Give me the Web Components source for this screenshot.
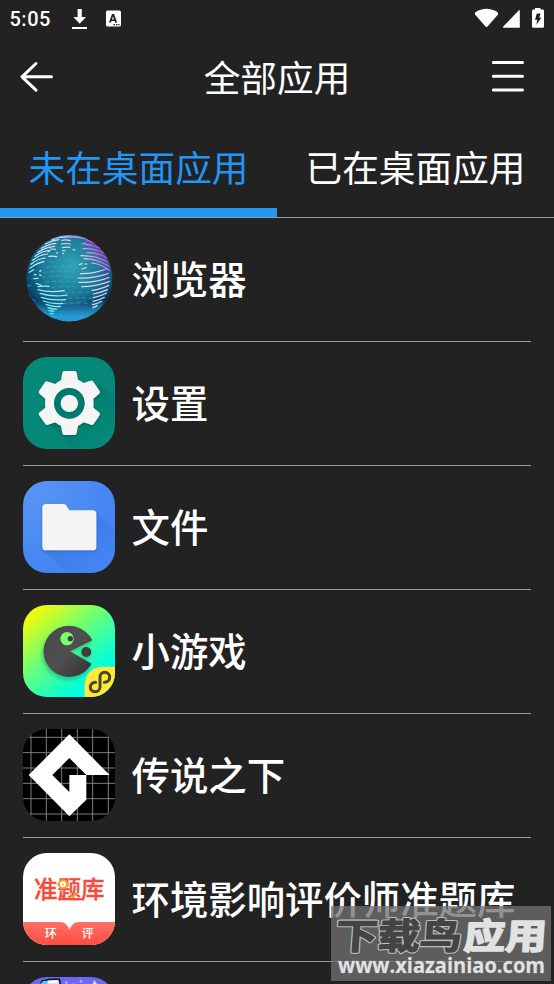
<!DOCTYPE html>
<html lang="zh-CN">
<head>
<meta charset="utf-8">
<title>全部应用</title>
<style>
  html, body {
    margin: 0;
    height: 100%;
    overflow: hidden;
    background: #222;
  }
  body {
    color: #fff;
    font-family: "Noto Sans CJK SC", sans-serif;
  }
</style>
</head>
<body>
<launcher-screen>
  <status-bar slot="top" time="5:05"></status-bar>
  <title-bar slot="top">全部应用</title-bar>
  <tab-bar slot="top">
    <tab-item selected>未在桌面应用</tab-item>
    <tab-item>已在桌面应用</tab-item>
  </tab-bar>

  <app-row>
    <globe-icon slot="icon"></globe-icon>浏览器
  </app-row>
  <app-row>
    <settings-icon slot="icon"></settings-icon>设置
  </app-row>
  <app-row>
    <files-icon slot="icon"></files-icon>文件
  </app-row>
  <app-row>
    <games-icon slot="icon"></games-icon>小游戏
  </app-row>
  <app-row>
    <maker-icon slot="icon"></maker-icon>传说之下
  </app-row>
  <app-row>
    <exam-icon slot="icon"></exam-icon>环境影响评价师准题库
  </app-row>
  <app-row>
    <space-icon slot="icon"></space-icon>
  </app-row>

  <site-mark slot="overlay"></site-mark>
</launcher-screen>

<script>
// registers an element whose shadow root is a clone of the given markup
function define(name, html, setup) {
  const template = document.createElement('template');
  template.innerHTML = html;

  window.customElements.define(name, class extends HTMLElement {
    constructor() {
      super();
      this.attachShadow({ mode: 'open' });
      this.shadowRoot.appendChild(template.content.cloneNode(true));
    }

    connectedCallback() {
      if (setup) setup(this, this.shadowRoot);
    }
  });
}

// app icons are all 92px tiles
function defineIcon(name, svg, radius = '24px') {
  define(name, `
    <style>
      :host { display: block; width: 92px; height: 92px; border-radius: ${radius}; overflow: hidden; }
      svg { display: block; width: 100%; height: 100%; }
    </style>
    ${svg}
  `);
}

define('launcher-screen', `
  <style>
    :host { display: flex; flex-direction: column; position: relative; height: 984px; width: 554px; overflow: hidden; }
    header { flex: none; }
    main { flex: 1; min-height: 0; overflow: hidden; }
  </style>
  <header><slot name="top"></slot></header>
  <main><slot></slot></main>
  <slot name="overlay"></slot>
`);

define('status-bar', `
  <style>
    :host { display: flex; align-items: center; height: 38px; padding: 0 8px 0 9.500px; font: 500 20px Roboto, sans-serif; }
    .time { width: 60.500px; letter-spacing: .5px; }
    svg { display: block; fill: #fff; }
    .left { flex: 1; }
  </style>
  <span class="time"></span>
  <svg class="left" width="80" height="38" viewBox="70 0 80 38" preserveAspectRatio="xMinYMid">
    <path d="M77.6 9h4.2v8h4.2l-6.3 6.8-6.3-6.8h4.2zM72 27h15v2H72z"/>
    <path fill-rule="evenodd" d="M107.5 10.5h12q1.5 0 1.5 1.5v13q0 1.500-1.500 1.500h-12q-1.500 0-1.500-1.500v-13q0-1.500 1.500-1.500zM112 14l-3 8.500h2l.5-1.600h3l.6 1.600h2l-3-8.500zM113 16.300l1 3.100h-2z"/>
    <path fill="#222" d="M113.500 24h1.500v1.300h-1.500zM116 24h1.500v1.300h-1.500zM118.300 24h1.200v1.300h-1.200z"/>
  </svg>
  <svg width="74" height="38" viewBox="472 0 74 38">
    <path d="M475 12.500Q486.500 5 498 12.500V14.500L487.500 26.500Q486.500 27.500 485.500 26.500L475 14.500z"/>
    <path d="M519.800 10v17.800H503.500q-1-.3-.3-1.300L518.500 10.700z"/>
    <path d="M535 9.500V8h5.500v1.500h2.300q1.200 0 1.200 1.200v15.900q0 1.200-1.200 1.200h-9.600q-1.200 0-1.200-1.200V10.700q0-1.200 1.200-1.200z"/>
    <path fill="#222" d="M536.800 13.500h3.600l-1 4.200h2l-5 7 .8-5h-2.200z"/>
  </svg>
`, (host, root) => {
  root.querySelector('.time').textContent = host.getAttribute('time');
});

define('title-bar', `
  <style>
    :host { display: grid; grid-template-columns: 60px 1fr 60px; align-items: center; height: 78px; font-size: 36.67px; line-height: 76px; font-weight: 400; }
    h1 { margin: 0; padding-bottom: 2px; font: inherit; text-align: center; }
    svg { display: block; fill: none; stroke: #fff; stroke-width: 3; stroke-linecap: round; stroke-linejoin: round; }
  </style>
  <svg width="60" height="78" viewBox="0 38 60 78"><path d="M36 63.500L22 76.800L36 90.200M22 76.800H51.500"/></svg>
  <h1><slot></slot></h1>
  <svg width="60" height="78" viewBox="494 38 60 78" overflow="visible"><path d="M493.300 62.500h29.200M493.300 76.300h29.200M493.300 90.100h29.200"/></svg>
`);

define('tab-bar', `
  <style>
    :host { display: grid; grid-template-columns: 1fr 1fr; height: 101px; border-bottom: 1px solid #999; }
  </style>
  <slot></slot>
`);

define('tab-item', `
  <style>
    :host { display: flex; justify-content: center; box-sizing: border-box; height: 101px; padding-top: 22px; line-height: 56px; font-size: 36.67px; font-weight: 400; }
    :host([selected]) { color: #2196f3; border-bottom: 9.500px solid #2196f3; }
  </style>
  <slot></slot>
`);

define('app-row', `
  <style>
    :host { display: flex; align-items: center; height: 124px; box-sizing: border-box; padding: 0 23px 2px; font-size: 38.4px; font-weight: 500; white-space: nowrap; background: linear-gradient(#999, #999) 23px 100% / 508px 1px no-repeat; }
    .label { padding: 0 0 4px 16.500px; line-height: 60px; }
  </style>
  <slot name="icon"></slot>
  <span class="label"><slot></slot></span>
`);

defineIcon('globe-icon', `
  <svg viewBox="39 24 276 276">
    <defs>
      <radialGradient id="sea" cx=".52" cy=".36" r=".65">
        <stop offset="0" stop-color="#30a4b5"/>
        <stop offset=".5" stop-color="#1b7b98"/>
        <stop offset=".85" stop-color="#0a456a"/>
        <stop offset="1" stop-color="#123b61"/>
      </radialGradient>
      <linearGradient id="glow" x2="0" y2="1">
        <stop offset=".75" stop-color="#2da6e0" stop-opacity="0"/>
        <stop offset=".94" stop-color="#249ad2"/>
      </linearGradient>
      <linearGradient id="land" gradientUnits="userSpaceOnUse" x1="90" y1="250" x2="290" y2="75">
        <stop offset="0" stop-color="#53f5ec"/>
        <stop offset=".35" stop-color="#c3eff5"/>
        <stop offset=".75" stop-color="#dfcaf1"/>
        <stop offset=".95" stop-color="#ef32ec"/>
      </linearGradient>
      <clipPath id="ball"><circle cx="178" cy="160" r="130"/></clipPath>
    </defs>
    <g clip-path="url(#ball)">
      <circle cx="178" cy="160" r="130" fill="url(#sea)"/>
      <path d="M48 185Q80 245 170 240T300 190V220Q260 263 160 257T55 220z" fill="#082b57" opacity=".5"/>
      <circle cx="178" cy="160" r="130" fill="url(#glow)"/>
      <g stroke="#3cacd2" stroke-width="3" stroke-dasharray="12 9" fill="none" opacity=".65">
        <path d="M120 111Q155 105 210 109M108 127Q160 121 205 126M100 142Q150 137 198 142M96 157Q150 151 199 156M106 172Q150 166 201 171M125 188Q160 182 210 187M164 204Q200 199 246 203M174 220Q210 216 246 220M158 236Q200 231 246 236M125 274H235M55 205L67 222L82 231M286 205L299 190M52 183L74 179"/>
      </g>
      <g stroke="url(#land)" stroke-width="3.700" stroke-linecap="round" fill="none">
        <path d="M126 45Q148 35 174 33M106 57Q128 46 147 44M94 70Q118 56 138 55M84 82Q105 67 134 64M75 94Q95 78 120 76M68 106Q88 89 112 87M63 118Q82 101 106 99M60 130Q78 115 102 110M58 142L71 134M117 94Q130 92 140 95M112 78L118 80M122 72L136 73M139 83L142 84"/>
        <path d="M155 46Q168 43 181 47M154 57Q168 54 181 57M157 68Q168 65 179 67M158 77L165 77M158 86L161 85M189 74L195 75M216 57L226 54M144 38Q190 32 226 40"/>
        <path d="M232 46Q246 49 258 55M226 58Q247 58 268 69M219 71Q252 69 279 83M232 83Q262 82 287 97M213 92Q257 91 292 111M222 101Q262 101 296 124M245 114Q273 116 298 136M208 119L217 116M225 117H231M216 132L228 128"/>
        <path d="M211 146Q252 147 292 131M203 159Q251 161 296 145M207 172Q255 174 298 157M215 185Q257 185 299 169M246 196Q275 192 296 181M250 207Q272 203 292 194M250 218Q273 214 289 205M249 229Q270 225 283 217M248 239Q263 236 275 229M249 248L262 242"/>
        <path d="M79 175L94 181M84 185Q98 183 117 184M84 194Q117 204 163 197M90 205Q127 217 172 210M94 217Q125 227 167 224M100 228Q126 238 158 235M108 238Q134 247 152 244M114 248Q129 254 140 252M117 257L131 259M121 266L129 266M73 149H78M71 161L84 160M89 139L93 137M89 149L93 152"/>
      </g>
      <path d="M123 40Q178 18 233 43" stroke="#78a7dc" stroke-width="9" fill="none" opacity=".7"/>
      <path d="M222 42Q278 72 300 130" stroke="#a72fc7" stroke-width="3" fill="none"/>
    </g>
  </svg>
`, '0');

defineIcon('settings-icon', `
  <svg viewBox="39 36 276 276">
    <defs>
      <linearGradient id="shade" x2="1" y2="1">
        <stop offset=".4" stop-color="#00665d" stop-opacity=".4"/>
        <stop offset=".85" stop-color="#00796b" stop-opacity="0"/>
      </linearGradient>
      <filter id="drop" x="-20%" y="-20%" width="140%" height="140%">
        <feDropShadow dx="0" dy="3" stdDeviation="3" flood-color="#004d45" flood-opacity=".6"/>
      </filter>
    </defs>
    <path fill="#058878" d="M39 36h276v276H39z"/>
    <path fill="url(#shade)" d="M90 210L192 312H315V162L268 115L195 265z"/>
    <path fill="#f5f5f5" fill-rule="evenodd" filter="url(#drop)" d="M163 78H194Q199 78 200 83L204 104Q213 108 221 114L242 107Q247 105 250 110L269 138Q272 143 267 147L250 161Q252 175 250 188L267 202Q272 206 269 211L251 237Q248 242 243 239L221 232Q213 239 204 242L200 264Q199 270 194 270H163Q158 270 157 264L153 242Q143 239 136 232L114 239Q109 242 106 237L87 210Q84 205 89 202L106 188Q104 175 106 161L89 147Q84 143 87 138L105 112Q108 107 114 110L136 117Q144 109 153 106L157 83Q158 78 163 78zM178 129A46 46 0 1 0 178 221A46 46 0 1 0 178 129z"/>
    <circle cx="178" cy="175" r="35" fill="none" stroke="#00796f" stroke-width="21"/>
    <circle cx="178" cy="175" r="26" fill="#f5f5f5"/>
  </svg>
`);

defineIcon('files-icon', `
  <svg viewBox="39 33 276 276">
    <defs>
      <radialGradient id="blue" cx=".1" cy=".1" r=".9">
        <stop offset="0" stop-color="#5995f4"/>
        <stop offset="1" stop-color="#4485f3"/>
      </radialGradient>
      <linearGradient id="shade" x2="1" y2="1">
        <stop offset=".4" stop-color="#2f6bce" stop-opacity=".4"/>
        <stop offset=".9" stop-color="#3e7ee9" stop-opacity="0"/>
      </linearGradient>
      <filter id="drop" x="-20%" y="-20%" width="140%" height="140%">
        <feDropShadow dx="0" dy="3" stdDeviation="3" flood-color="#1b4fa8" flood-opacity=".6"/>
      </filter>
    </defs>
    <path fill="url(#blue)" d="M39 33h276v276H39z"/>
    <path fill="url(#shade)" d="M99 238L170 309H315V183L258 126V240z"/>
    <path fill="#f4f4f4" filter="url(#drop)" d="M108 102H161Q165 102 168 106L178 121H248Q259 121 259 132V230Q259 241 248 241H108Q97 241 97 230V113Q97 102 108 102z"/>
  </svg>
`);

defineIcon('games-icon', `
  <svg viewBox="39 30 276 276">
    <defs>
      <linearGradient id="lime" x1=".08" y1="0" x2=".92" y2="1">
        <stop offset=".05" stop-color="#f7fb05"/>
        <stop offset=".4" stop-color="#6fff72"/>
        <stop offset=".78" stop-color="#00ffdc"/>
        <stop offset="1" stop-color="#00ffe8"/>
      </linearGradient>
      <linearGradient id="body" x2="1" y2="1">
        <stop offset="0" stop-color="#484848"/>
        <stop offset=".5" stop-color="#505050"/>
        <stop offset="1" stop-color="#303030"/>
      </linearGradient>
      <filter id="drop" x="-20%" y="-20%" width="140%" height="150%">
        <feDropShadow dx="-3" dy="8" stdDeviation="6" flood-color="#079b70" flood-opacity=".6"/>
      </filter>
    </defs>
    <path fill="url(#lime)" d="M39 30h276v276H39z"/>
    <g filter="url(#drop)">
      <path fill="url(#body)" d="M247 136A77 77 0 1 0 245 206L180 169z"/>
      <circle cx="229" cy="171" r="15" fill="#3c3c3c"/>
    </g>
    <circle cx="171" cy="131" r="20" fill="#79ff71"/>
    <circle cx="181" cy="131" r="8" fill="#3d3d3d"/>
    <path fill="#ffe83e" d="M224 306V276Q224 215 285 215H315V306z"/>
    <path d="M283 262C294 262 299 254 299 247C299 238 292 232 284 232C275 232 270 239 270 247V275C270 284 263 290 255 290C246 290 241 284 241 277C241 269 247 262 257 262" fill="none" stroke="#4b4524" stroke-width="9" stroke-linecap="round"/>
  </svg>
`);

defineIcon('maker-icon', `
  <svg viewBox="39 27 276 276">
    <path d="M39 27h276v276H39z"/>
    <path d="M63 27V303M109 27V303M155 27V303M202 27V303M248 27V303M295 27V303M39 52H315M39 98H315M39 144H315M39 190H315M39 236H315M39 282H315" stroke="#858585" stroke-width="2.800"/>
    <path fill="#fff" fill-rule="evenodd" d="M178 43L299 165H229L178 114L127 165L178 216V165H229V239L178 289L56 165z"/>
  </svg>
`);

defineIcon('exam-icon', `
  <svg viewBox="39 24 276 276">
    <defs>
      <linearGradient id="red" x2="0" y2="1">
        <stop offset="0" stop-color="#ff7165"/>
        <stop offset="1" stop-color="#ff4c40"/>
      </linearGradient>
    </defs>
    <path fill="#fff" d="M39 24h276v276H39z"/>
    <path fill="url(#red)" d="M39 231H151Q171 231 178 256Q186 231 206 231H315V300H39z"/>
    <text x="72" y="160" font-size="71" font-weight="500" fill="#f64a3b" stroke="#f64a3b" textLength="212" lengthAdjust="spacingAndGlyphs" font-family="Noto Sans CJK SC, sans-serif">准题库</text>
    <circle cx="159" cy="118" r="12" fill="#fff" stroke="#ff9f23" stroke-width="6"/>
    <path d="M140 118H147M159 101V106M172 118H178M157 118H161M180 149L188 157L202 146" fill="none" stroke="#ff9f23" stroke-width="5"/>
    <path d="M150 163H219" stroke="#f64a3b" stroke-width="6"/>
    <g fill="#fff" font-size="36" font-family="Noto Sans CJK SC, sans-serif">
      <text x="104" y="279">环</text>
      <text x="215" y="279">评</text>
    </g>
  </svg>
`);

// only the top edge of this one is on screen
defineIcon('space-icon', `
  <svg viewBox="39 396 276 276">
    <path fill="#6b68f2" d="M39 396h276v276H39z"/>
    <path d="M88 430L95 409Q122 400 148 403L153 430" fill="#d7dcff" stroke="#141225" stroke-width="5"/>
    <path d="M90 417L100 408L115 407L105 430H88z" fill="#4fc7f2"/>
    <path d="M115 411L144 409" stroke="#fff" stroke-width="7"/>
    <path d="M254 405L258 414L265 419H244L250 414z" fill="#e4e1ff"/>
    <g fill="#b1adff"><circle cx="169" cy="413" r="4"/><circle cx="213" cy="409" r="4"/><circle cx="191" cy="416" r="2"/></g>
  </svg>
`);

define('site-mark', `
  <style>
    :host { display: block; position: absolute; left: 331px; top: 906px; width: 220px; height: 75px; background: rgba(112, 112, 112, .76); }
    svg { display: block; overflow: visible; }
    text { paint-order: stroke; stroke-linejoin: round; }
  </style>
  <svg width="220" height="75" viewBox="0 0 220 75">
    <g font-family="Noto Sans CJK SC, sans-serif" font-weight="700" font-size="42" transform="translate(1 42.500) skewX(-4) scale(1 .85)">
      <text x="3" y="0" fill="#444" stroke="#bdbdbd" stroke-width="4" textLength="126" lengthAdjust="spacingAndGlyphs">下载鸟</text>
      <text x="3" y="0" fill="#444" stroke="#444" stroke-width="1.500" textLength="126" lengthAdjust="spacingAndGlyphs" aria-hidden="true">下载鸟</text>
      <text x="131" y="0" fill="#e2e2e2" stroke="#e2e2e2" stroke-width="2" textLength="83" lengthAdjust="spacingAndGlyphs">应用</text>
    </g>
    <text x="7" y="67" fill="#e2e2e2" stroke="#777" stroke-width="1" font-family="Open Sans, sans-serif" font-weight="700" font-size="21" textLength="207" lengthAdjust="spacingAndGlyphs">www.xiazainiao.com</text>
  </svg>
`);
</script>
</body>
</html>
